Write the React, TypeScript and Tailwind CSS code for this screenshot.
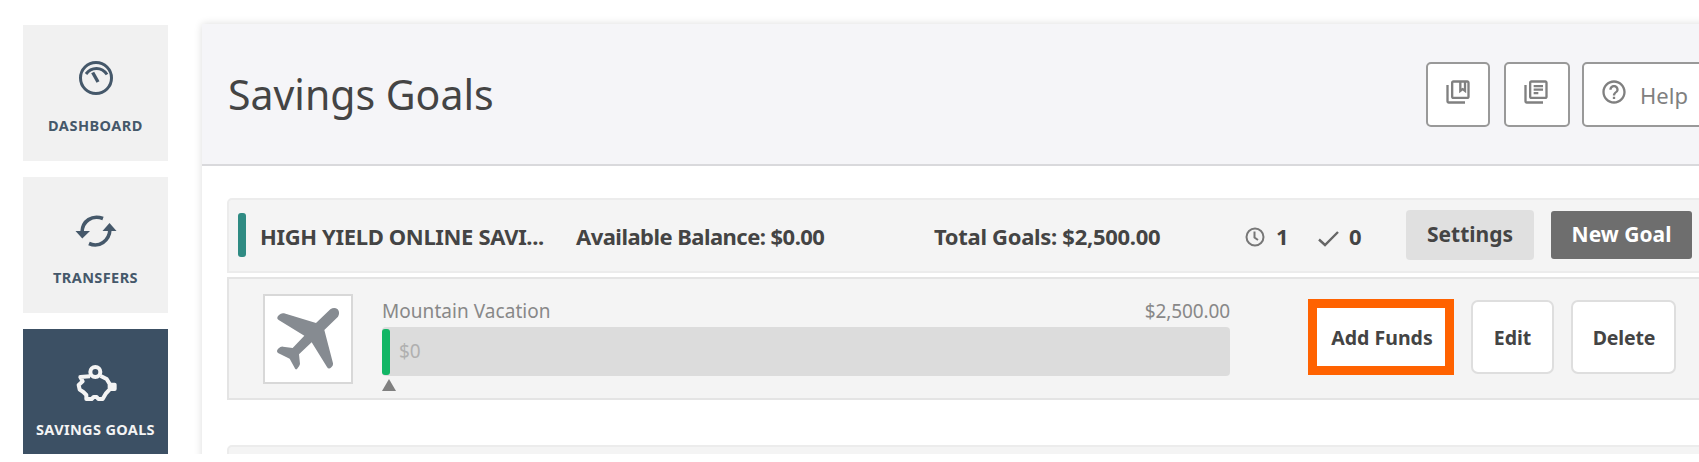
import type { ReactNode } from 'react'
import { MdHelpOutline, MdOutlineCollectionsBookmark, MdOutlineLibraryBooks } from 'react-icons/md'

const navItems = [
  { id: 'dashboard', label: 'DASHBOARD', icon: <GaugeIcon />, active: false, tracking: 'tracking-[0.5px]' },
  { id: 'transfers', label: 'TRANSFERS', icon: <TransferIcon />, active: false, tracking: 'tracking-[0.4px]' },
  { id: 'savings', label: 'SAVINGS GOALS', icon: <PiggyIcon />, active: true, tracking: 'tracking-[0.35px]' },
]

function GaugeIcon() {
  return (
    <svg className="w-[42px] h-[36px]" viewBox="75 59 42 36" fill="none" stroke="currentColor" strokeWidth={3}>
      <circle cx="96" cy="77" r="15.5" />
      <path d="M86 73Q90 67.5 96.5 67.5T107 73.5" />
      <path strokeWidth={3.4} d="M92.7 71.5L98 81" />
    </svg>
  )
}

function TransferIcon() {
  return (
    <svg className="w-[42px] h-[36px]" viewBox="75 211 42 36" fill="none" stroke="currentColor" strokeWidth={3.6}>
      <path d="M103 217.5C92 213.5 82.5 220 82 231" />
      <path d="M89 242.5C99 247 109.5 240 110 228" />
      <path fill="currentColor" stroke="none" d="M75.500 230H90L82.300 237.500zM102.500 230L109.500 222L116.500 230z" />
    </svg>
  )
}

function PiggyIcon() {
  return (
    <svg className="w-[42px] h-[38px]" viewBox="225 396 126 114" fill="none" stroke="currentColor" strokeWidth={12} strokeLinejoin="round">
      <circle cx="286" cy="420" r="15" />
      <path d="M270 433L241 435L248 448L236 459L239 473L250 480L259 489V501H275L281 495H290L295 501H308L318 484L329 472V456L320 441L302 432" />
      <path fill="currentColor" d="M333 458L344 458V471L333 471z" />
    </svg>
  )
}

function PlaneIcon() {
  return (
    <svg className="w-[64px] h-[64px]" viewBox="231 232 192 192" fill="#868b91">
      <path d="M394 239Q406 231 416 239Q424 248 417 261L376 301L402 401Q403 408 397 413Q389 421 384 412L338 338L300 374L303 403Q302 409 294 418Q289 422 286 413L272 387L237 370Q230 364 239 356Q245 350 252 351L281 355L316 318L239 271Q230 265 240 256Q247 249 255 251L351 280z" />
    </svg>
  )
}

function HeaderButton({ className, children }: { className: string; children: ReactNode }) {
  return (
    <button className={`h-[65px] shrink-0 rounded-[5px] border-2 border-[#999] bg-white text-[#808080] flex items-center ${className}`}>
      {children}
    </button>
  )
}

export default function App() {
  return (
    <div className="w-[1699px] h-[462px] overflow-hidden bg-white font-['Noto_Sans',sans-serif] text-[#444]">
      <div className="flex h-[454px] overflow-hidden pt-6 pl-[23px]">
        <nav className="w-[145px] shrink-0 pt-[0.5px] flex flex-col gap-4">
          {navItems.map(item => (
            <a
              key={item.id}
              className={`h-[136px] shrink-0 flex flex-col items-center pt-[35px] ${item.active ? 'bg-[#3c5064] text-[#f4f4f4]' : 'bg-[#f1f1f1] text-[#45586a]'}`}>
              <span className="h-[38px] flex">{item.icon}</span>
              <span className={`mt-[17px] text-[14.5px] leading-[20px] font-bold whitespace-nowrap ${item.tracking}`}>{item.label}</span>
            </a>
          ))}
        </nav>

        <main className="ml-[34px] w-[1600px] h-[500px] shrink-0 bg-white shadow-[0_0_8px_rgba(0,0,0,0.14)]">
          <header className="h-[142px] border-b-2 border-[#d9d9dc] bg-[#f5f5f8] flex items-start pl-[26px] pt-[38px]">
            <h1 className="w-[1198px] shrink-0 text-[41px] leading-[64px]">Savings Goals</h1>
            <HeaderButton className="w-[64px] justify-center pb-[5px]">
              <MdOutlineCollectionsBookmark className="size-[28px]" />
            </HeaderButton>
            <HeaderButton className="ml-[14px] w-[66px] justify-center pb-[5px] pr-[2px]">
              <MdOutlineLibraryBooks className="size-[28px]" />
            </HeaderButton>
            <HeaderButton className="ml-[12px] w-[160px] pl-[16px]">
              <MdHelpOutline className="size-[28px] -mt-[5px]" />
              <span className="ml-[12px] text-[22px] leading-[30px]">Help</span>
            </HeaderButton>
          </header>

          <div className="pl-[25px] pt-[32px]">
            <section className="h-[75px] rounded-t-[5px] border-2 border-[#ececec] bg-[#f4f4f4] flex items-start font-bold text-[21px] leading-[30px] whitespace-nowrap">
              <div className="ml-[9px] mt-[13px] w-[8px] h-[44px] rounded-[3px] bg-[#2f8b83]" />
              <span className="ml-[14px] mt-[21px] w-[316px] text-[22px] tracking-[-0.35px]">HIGH YIELD ONLINE SAVI...</span>
              <span className="mt-[21px] w-[358px] text-[22px] tracking-[-0.54px]">Available Balance: $0.00</span>
              <span className="mt-[21px] w-[311px] text-[22px] tracking-[-0.3px]">Total Goals: $2,500.00</span>
              <svg className="mt-[27px] size-[20px]" viewBox="0 0 20 20" fill="none" stroke="#777" strokeWidth={2}>
                <circle cx="10" cy="10" r="8.5" />
                <path d="M9.5 4.5V10.5L13 13" />
              </svg>
              <span className="ml-[11px] mt-[21px] w-[42px] text-[22px]">1</span>
              <svg className="mt-[30px] w-[21px] h-[17px]" viewBox="0 0 21 17" fill="none" stroke="#666" strokeWidth={2.4}>
                <path d="M1 9.5L7 15L20 2" />
              </svg>
              <span className="ml-[10px] mt-[21px] w-[57px] text-[22px]">0</span>
              <button className="mt-[10px] w-[128px] h-[50px] rounded-[4px] bg-[#e0e0e0] pb-[2px]">Settings</button>
              <button className="ml-[17px] mt-[11px] w-[141px] h-[48px] rounded-[3px] bg-[#6e6e6e] pb-[2px] text-white">New Goal</button>
            </section>

            <section className="mt-[4px] h-[123px] border-2 border-[#e4e4e4] bg-[#f4f4f4] flex items-start">
              <div className="ml-[34px] mt-[15px] size-[90px] border-2 border-[#d8d8d8] bg-white flex items-center justify-center">
                <PlaneIcon />
              </div>
              <div className="ml-[29px] mt-[16px] w-[848px] text-[#888]">
                <div className="flex justify-between text-[19px] leading-[32px] whitespace-nowrap">
                  <span className="tracking-[0.05px]">Mountain Vacation</span>
                  <span className="tracking-[-0.1px]">$2,500.00</span>
                </div>
                <div className="h-[49px] rounded-[4px] bg-[#dcdcdc] flex items-center">
                  <div className="w-[8px] h-[46px] rounded-[3px] bg-[#12b665]" />
                  <span className="ml-[9px] text-[19px] text-[#b0b0b0]">$0</span>
                </div>
                <svg className="mt-[3px] w-[14px] h-[12px]" viewBox="0 0 14 12" fill="#808080">
                  <path d="M7 0L14 12H0z" />
                </svg>
              </div>
              <div className="ml-[78px] mt-[20px] flex items-center gap-[17px] text-[19.5px] font-bold whitespace-nowrap">
                <button className="w-[146px] h-[76px] border-[9px] border-[#ff6200] bg-white pt-[2px] pl-[2px]">Add Funds</button>
                <button className="w-[83px] h-[74px] rounded-[7px] border-2 border-[#dedede] bg-white pt-[2px]">Edit</button>
                <button className="w-[105px] h-[74px] rounded-[7px] border-2 border-[#dedede] bg-white pt-[2px] pl-[1px] tracking-[-0.15px]">Delete</button>
              </div>
            </section>

            <section className="mt-[45px] h-[75px] rounded-t-[5px] border-2 border-[#ececec] bg-[#f4f4f4]" />
          </div>
        </main>
      </div>
    </div>
  )
}
